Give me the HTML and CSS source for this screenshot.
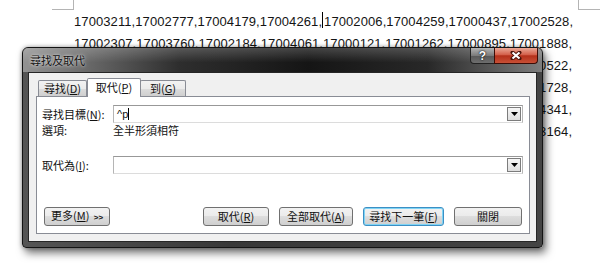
FILE: index.html
```html
<!DOCTYPE html>
<html lang="zh-Hant">
<head>
    <meta charset="UTF-8">
    <title>尋找及取代</title>
    <link rel="stylesheet" href="styles.css">
</head>
<body>

<div class="page-marks">
    <div class="mark mark-left"></div>
    <div class="mark mark-right"></div>
</div>

<div class="doc-text">
    <p>17003211,17002777,17004179,17004261,<span class="caret"></span>17002006,17004259,17000437,17002528,</p>
    <p>17002307,17003760,17002184,17004061,17000121,17001262,17000895,17001888,</p>
    <p>17001453,17003019,17002644,17000786,17004312,17001937,17003105,17000522,</p>
    <p>17000958,17004127,17001379,17003540,17002213,17000664,17003891,17001728,</p>
    <p>17003466,17001082,17004035,17002897,17000349,17003658,17001514,17004341,</p>
    <p>17002170,17000812,17003327,17001609,17004488,17002755,17000293,17003164,</p>
</div>

<div class="dialog">
    <div class="titlebar">
        <span class="title">尋找及取代</span>
        <div class="caption-buttons">
            <span class="cap-btn help">?</span>
            <span class="cap-btn close">
                <svg width="12" height="9" viewBox="0 0 12 9">
                    <path d="M2.5 1.5L9.5 7.5M9.5 1.5L2.5 7.5" stroke="#4a1208" stroke-width="4" stroke-linecap="round"/>
                    <path d="M2.5 1.5L9.5 7.5M9.5 1.5L2.5 7.5" stroke="#fff" stroke-width="2.2"/>
                </svg>
            </span>
        </div>
    </div>

    <div class="client">
        <div class="tabs">
            <div class="tab">尋找(<u>D</u>)</div>
            <div class="tab active">取代(<u>P</u>)</div>
            <div class="tab last">到(<u>G</u>)</div>
        </div>

        <div class="panel">
            <div class="field-row">
                <label>尋找目標(<u>N</u>):</label>
                <div class="combo">
                    <span class="value">^p</span><span class="text-caret"></span>
                    <span class="drop"><svg width="7" height="4" viewBox="0 0 7 4"><path d="M0 0h7l-3.5 4z" fill="#000"/></svg></span>
                </div>
            </div>
            <div class="options-row">
                <span>選項:</span>
                <span>全半形須相符</span>
            </div>
            <div class="field-row replace-row">
                <label>取代為(<u>I</u>):</label>
                <div class="combo">
                    <span class="value"></span>
                    <span class="drop"><svg width="7" height="4" viewBox="0 0 7 4"><path d="M0 0h7l-3.5 4z" fill="#000"/></svg></span>
                </div>
            </div>

            <div class="buttons">
                <button class="btn btn-more">更多(<u>M</u>) <span class="chev">&gt;&gt;</span></button>
                <button class="btn btn-replace">取代(<u>R</u>)</button>
                <button class="btn btn-all">全部取代(<u>A</u>)</button>
                <button class="btn btn-next">尋找下一筆(<u>F</u>)</button>
                <button class="btn btn-close">關閉</button>
            </div>
        </div>
    </div>
</div>

</body>
</html>
```

FILE: styles.css
```css
* {
    box-sizing: border-box;
}
body {
    margin: 0;
    height: 264px;
    overflow: hidden;
    position: relative;
    background-color: #fff;
    font-family: "Liberation Sans", Arial, sans-serif;
}

/* page behind the dialog */
.page-marks {
    display: flex;
    justify-content: space-between;
    padding-left: 52px;
    height: 10px;
}
.mark {
    height: 10px;
    border-bottom: 1px solid #b4b4b4;
}
.mark-left {
    width: 22px;
    border-right: 1px solid #b4b4b4;
}
.mark-right {
    width: 22px;
    border-left: 1px solid #b4b4b4;
}
.doc-text {
    padding: 1px 0 0 74px;
    font-size: 13px;
    line-height: 22px;
    letter-spacing: 0.09px;
    color: #141414;
}
.doc-text p {
    margin: 0;
    white-space: nowrap;
}
.caret {
    display: inline-block;
    width: 0;
    height: 16px;
    border-left: 1px solid #000;
    vertical-align: -2px;
    margin: 0 1px 0 0;
}

/* dialog window */
.dialog {
    position: absolute;
    left: 22px;
    top: 47px;
    width: 521px;
    height: 201px;
    display: flex;
    flex-direction: column;
    padding: 0 5px 5px 5px;
    border: 1px solid #141414;
    border-radius: 6px 6px 4px 4px;
    background: linear-gradient(90deg, #555, #383838 40%, #444 100%);
    box-shadow: 3px 5px 9px rgba(0, 0, 0, 0.55), 0 0 4px rgba(0, 0, 0, 0.35);
    font-family: "Noto Sans CJK TC", sans-serif;
    font-size: 11px;
    color: #111;
}
.titlebar {
    height: 24px;
    margin: 0 -5px;
    padding-left: 7px;
    display: flex;
    align-items: flex-start;
    border-radius: 5px 5px 0 0;
    background:
        linear-gradient(180deg, rgba(255, 255, 255, 0.2), rgba(255, 255, 255, 0) 60%),
        linear-gradient(90deg, #939393 0%, #717171 10%, #2e2e2e 30%, #151515 55%, #282828 78%, #5e5e5e 92%, #7e7e7e 100%);
}
.title {
    line-height: 25px;
    color: #111;
    text-shadow: 0 0 4px rgba(255, 255, 255, 0.7), 0 0 2px rgba(255, 255, 255, 0.6);
}
.caption-buttons {
    margin-left: auto;
    margin-right: 4px;
    display: flex;
}
.cap-btn {
    height: 16px;
    display: flex;
    align-items: center;
    justify-content: center;
    border: 1px solid #222;
    border-top: none;
}
.help {
    width: 25px;
    border-radius: 0 0 0 4px;
    background: linear-gradient(180deg, #b4b4b4, #7c7c7c 50%, #585858 51%, #6e6e6e);
    color: #fff;
    font-family: "Liberation Sans", Arial, sans-serif;
    font-weight: bold;
    font-size: 12px;
    line-height: 14px;
    text-shadow: 0 0 2px #111, 0 0 1px #111;
}
.close {
    width: 44px;
    margin-left: -1px;
    border-radius: 0 0 4px 0;
    border-color: #3c0c06;
    background: linear-gradient(180deg, #eaa896, #d4604a 45%, #b4301a 52%, #c85036);
}

.client {
    flex: 1;
    display: flex;
    flex-direction: column;
    padding: 5px 6px 7px 7px;
    background-color: #f0f0f0;
    border: 1px solid #262626;
}
.tabs {
    display: flex;
    align-items: flex-end;
    height: 19px;
    margin-bottom: -1px;
    padding-left: 2px;
    position: relative;
    z-index: 1;
}
.tab {
    height: 16px;
    margin-bottom: 1px;
    line-height: 15px;
    text-align: center;
    border: 1px solid #898c95;
    border-bottom: none;
    border-radius: 2px 2px 0 0;
    background: linear-gradient(180deg, #f2f2f2, #ebebeb 50%, #dddddd 51%, #cfcfcf);
}
.tab:first-child {
    width: 49px;
}
.tab.active {
    width: 54px;
    height: 19px;
    margin-bottom: 0;
    line-height: 17px;
    background: #fff;
}
.tab.last {
    width: 46px;
    margin-left: -1px;
}
.tab u, .field-row u, .btn u {
    text-underline-offset: 1px;
}

.panel {
    flex: 1;
    display: flex;
    flex-direction: column;
    padding: 8px 6px 7px 5px;
    background-color: #fff;
    border: 1px solid #898c95;
}
.field-row {
    display: grid;
    grid-template-columns: 71px 1fr;
    align-items: center;
    height: 18px;
}
.field-row label {
    line-height: 14px;
}
.combo {
    height: 18px;
    display: flex;
    align-items: center;
    padding-left: 3px;
    border: 1px solid #b5b5b5;
    border-top-color: #989898;
    border-bottom-color: #dcdcdc;
    font-family: "Liberation Sans", Arial, sans-serif;
    font-size: 11px;
}
.value {
    line-height: 14px;
}
.text-caret {
    width: 0;
    height: 12px;
    border-left: 1px solid #000;
}
.drop {
    margin-left: auto;
    margin-right: 1px;
    width: 14px;
    height: 14px;
    display: flex;
    align-items: center;
    justify-content: center;
    border: 1px solid #7c7c7c;
    background: linear-gradient(180deg, #f6f6f6, #dedede);
}
.options-row {
    display: grid;
    grid-template-columns: 71px 1fr;
    height: 14px;
    line-height: 14px;
}
.replace-row {
    margin-top: 19px;
}

.buttons {
    margin-top: auto;
    display: flex;
    gap: 10px;
    padding: 0 1px 0 2px;
}
.btn {
    height: 19px;
    padding: 0;
    border: 1px solid #707070;
    border-radius: 3px;
    background: linear-gradient(180deg, #f2f2f2, #ebebeb 48%, #dddddd 50%, #cfcfcf);
    font-family: "Noto Sans CJK TC", sans-serif;
    font-size: 11px;
    line-height: 15px;
    color: #111;
}
.btn-more {
    width: 66px;
    text-align: left;
    padding-left: 6px;
}
.chev {
    font-family: "Liberation Sans", Arial, sans-serif;
    font-size: 8px;
    font-weight: bold;
    margin-left: 2px;
}
.btn-replace {
    width: 66px;
    margin-left: auto;
}
.btn-all {
    width: 74px;
}
.btn-next {
    width: 81px;
    border-color: #3c8fc4;
    box-shadow: inset 0 0 0 1px #7fd4f5;
}
.btn-close {
    width: 68px;
}
```
